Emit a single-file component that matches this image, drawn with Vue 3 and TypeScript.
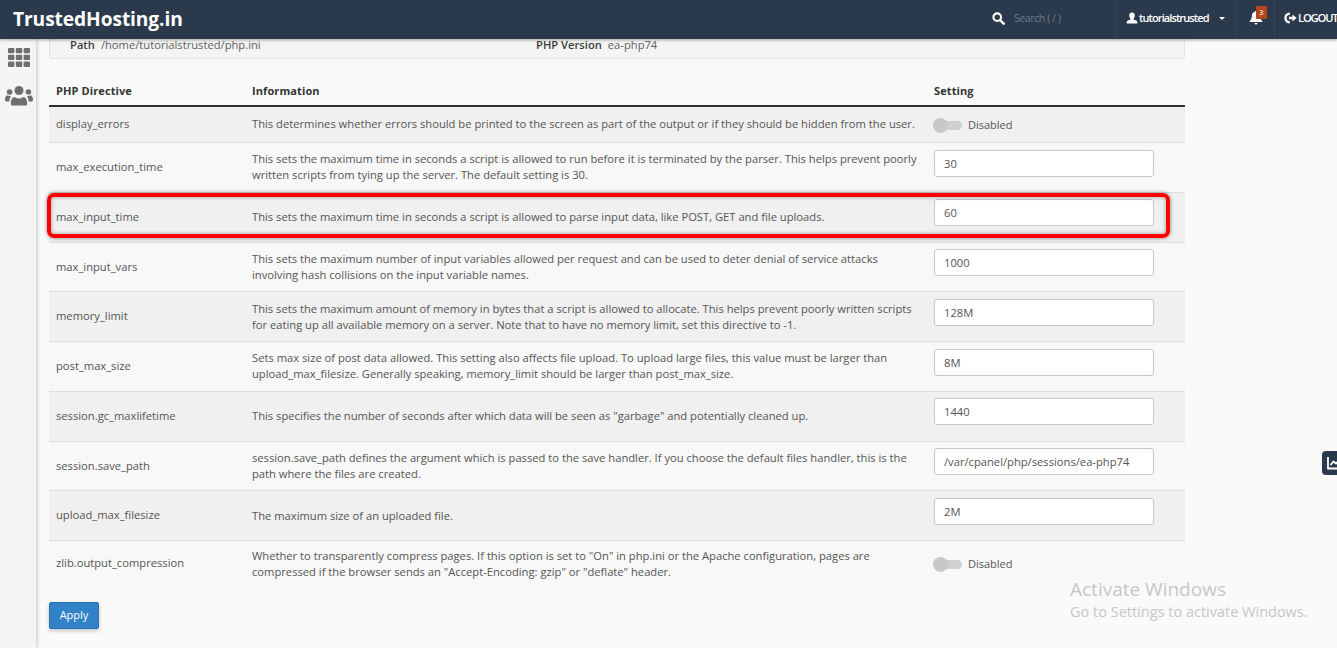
<script setup lang="ts">
interface Row {
  name: string
  info: string
  value?: string
}
const rows: Row[] = [
  { name: 'display_errors', info: 'This determines whether errors should be printed to the screen as part of the output or if they should be hidden from the user.' },
  { name: 'max_execution_time', info: 'This sets the maximum time in seconds a script is allowed to run before it is terminated by the parser. This helps prevent poorly written scripts from tying up the server. The default setting is 30.', value: '30' },
  { name: 'max_input_time', info: 'This sets the maximum time in seconds a script is allowed to parse input data, like POST, GET and file uploads.', value: '60' },
  { name: 'max_input_vars', info: 'This sets the maximum number of input variables allowed per request and can be used to deter denial of service attacks involving hash collisions on the input variable names.', value: '1000' },
  { name: 'memory_limit', info: 'This sets the maximum amount of memory in bytes that a script is allowed to allocate. This helps prevent poorly written scripts for eating up all available memory on a server. Note that to have no memory limit, set this directive to -1.', value: '128M' },
  { name: 'post_max_size', info: 'Sets max size of post data allowed. This setting also affects file upload. To upload large files, this value must be larger than upload_max_filesize. Generally speaking, memory_limit should be larger than post_max_size.', value: '8M' },
  { name: 'session.gc_maxlifetime', info: 'This specifies the number of seconds after which data will be seen as "garbage" and potentially cleaned up.', value: '1440' },
  { name: 'session.save_path', info: 'session.save_path defines the argument which is passed to the save handler. If you choose the default files handler, this is the path where the files are created.', value: '/var/cpanel/php/sessions/ea-php74' },
  { name: 'upload_max_filesize', info: 'The maximum size of an uploaded file.', value: '2M' },
  { name: 'zlib.output_compression', info: 'Whether to transparently compress pages. If this option is set to "On" in php.ini or the Apache configuration, pages are compressed if the browser sends an "Accept-Encoding: gzip" or "deflate" header.' },
]
</script>

<template>
  <div class="page">
    <header class="topbar">
      <div class="logo">TrustedHosting.in</div>
      <div class="search">
        <svg class="search-icon" viewBox="0 0 14 14" width="13" height="13">
          <circle cx="5.6" cy="5.6" r="4.1" fill="none" stroke="#fff" stroke-width="2.2" />
          <path d="M8.7 8.7 12.6 12.6" stroke="#fff" stroke-width="2.6" stroke-linecap="round" />
        </svg>
        <span class="search-text">Search ( / )</span>
      </div>
      <div class="user seg">
        <svg viewBox="0 0 12 12" width="12" height="12">
          <path d="M6 .6c1.8 0 2.8 1.3 2.8 3 0 1.3-.6 2.500-1.300 3.200v.8c1.200.5 3.600 1 3.800 2.200v1.600H.7V9.800c.2-1.200 2.600-1.700 3.800-2.200v-.8C3.800 6.100 3.200 4.900 3.200 3.600c0-1.700 1-3 2.800-3Z" fill="#fff" />
        </svg>
        <span class="user-name">tutorialstrusted</span>
        <i class="caret"></i>
      </div>
      <div class="bell seg">
        <svg viewBox="0 0 14 15" width="14" height="15">
          <path d="M7 .8c.6 0 1 .4 1 .9 2 .4 3.100 2 3.100 4 0 3.300 1.300 4.500 2.200 5.400v.8H.7v-.8c.9-.9 2.200-2.100 2.200-5.400 0-2 1.100-3.600 3.100-4 0-.5.400-.9 1-.9Z" fill="#fff" />
          <path d="M5.500 13h3c0 .9-.7 1.500-1.500 1.500S5.500 13.900 5.500 13Z" fill="#fff" />
        </svg>
        <span class="badge">3</span>
      </div>
      <div class="logout seg">
        <svg viewBox="0 0 13 12" width="13" height="12">
          <path d="M5.800 1.600A4.400 4.400 0 1 0 5.800 10.400" fill="none" stroke="#fff" stroke-width="2.300" />
          <path d="M5 4.700h3.500V2.400L12.700 6 8.500 9.600V7.300H5Z" fill="#fff" />
        </svg>
        <span>LOGOUT</span>
      </div>
    </header>

    <div class="body">
      <aside class="sidebar">
        <svg class="side-grid" viewBox="0 0 22 19" width="22" height="19">
          <g fill="#6f6f6f">
            <rect x="0" y="0" width="6.400" height="5.300" rx="1" />
            <rect x="7.800" y="0" width="6.400" height="5.300" rx="1" />
            <rect x="15.600" y="0" width="6.400" height="5.300" rx="1" />
            <rect x="0" y="6.800" width="6.400" height="5.300" rx="1" />
            <rect x="7.800" y="6.800" width="6.400" height="5.300" rx="1" />
            <rect x="15.600" y="6.800" width="6.400" height="5.300" rx="1" />
            <rect x="0" y="13.600" width="6.400" height="5.300" rx="1" />
            <rect x="7.800" y="13.600" width="6.400" height="5.300" rx="1" />
            <rect x="15.600" y="13.600" width="6.400" height="5.300" rx="1" />
          </g>
        </svg>
        <svg class="side-users" viewBox="0 0 28 20" width="28" height="20">
          <g fill="#6f6f6f">
            <circle cx="14" cy="4.500" r="4.500" />
            <circle cx="4.600" cy="6" r="2.800" />
            <circle cx="23.400" cy="6" r="2.800" />
            <path d="M7.300 19.600c-1 0-1.500-.6-1.500-1.500 0-4 1.300-7.200 3.700-7.200 1 .8 2.700 1.500 4.500 1.500s3.500-.7 4.500-1.500c2.400 0 3.700 3.200 3.700 7.200 0 .9-.5 1.500-1.500 1.500Z" />
            <path d="M6.300 9.800c-1 1.200-1.800 3-1.900 5.700H1.300C.4 15.500 0 15 0 14.100c0-2.600.7-4.900 2.400-4.900.9.700 2.400 1.100 3.900.6Z" />
            <path d="M21.700 9.800c1 1.200 1.800 3 1.900 5.700h3.100c.9 0 1.300-.5 1.300-1.400 0-2.600-.7-4.900-2.400-4.900-.9.700-2.400 1.100-3.900.6Z" />
          </g>
        </svg>
      </aside>

      <main class="main">
        <section class="info-card">
          <div class="info-item info-path"><b>Path</b><span>/home/tutorialstrusted/php.ini</span></div>
          <div class="info-item"><b>PHP Version</b><span>ea-php74</span></div>
        </section>

        <div class="table">
          <div class="head">
            <div>PHP Directive</div>
            <div>Information</div>
            <div>Setting</div>
          </div>
          <div
            v-for="(row, i) in rows"
            :key="row.name"
            class="row"
            :class="{ shaded: i % 2 === 0, first: i === 0, last: i === rows.length - 1 }"
          >
            <div class="name">{{ row.name }}</div>
            <div class="desc">{{ row.info }}</div>
            <div v-if="row.value" class="setting">
              <input class="field" type="text" :value="row.value" />
            </div>
            <div v-else class="switch-cell">
              <span class="switch"><i class="knob"></i></span>
              <span class="switch-label">Disabled</span>
            </div>
          </div>
        </div>

        <button class="apply" type="button">Apply</button>
      </main>
    </div>

    <div class="highlight"></div>
    <div class="side-tab">
      <svg viewBox="0 0 15 14" width="15" height="14">
        <path d="M1 1v11.500h13" fill="none" stroke="#fff" stroke-width="1.800" />
        <path d="M3.500 9 6.500 5.500 9 7.500 13.500 3" fill="none" stroke="#fff" stroke-width="1.800" />
      </svg>
    </div>
    <div class="watermark">
      <div class="wm-title">Activate Windows</div>
      <div class="wm-sub">Go to Settings to activate Windows.</div>
    </div>
  </div>
</template>

<style>
html, body { margin: 0; background: #fafafa; overflow: hidden; }
</style>

<style scoped>
.page {
  position: relative;
  width: 1337px;
  height: 648px;
  overflow: hidden;
  background: #fafafa;
  font-family: "Open Sans", "Noto Sans", sans-serif;
  font-size: 11.2px;
  color: #555;
}
.topbar {
  position: relative;
  z-index: 3;
  display: flex;
  align-items: center;
  height: 39px;
  background: #2a3a4c;
  box-shadow: 0 1px 3px rgba(0, 0, 0, .35);
  color: #fff;
  white-space: nowrap;
}
.logo {
  margin-left: 13px;
  padding-bottom: 3px;
  font-size: 19.2px;
  font-weight: 700;
  letter-spacing: -.1px;
}
.search {
  display: flex;
  align-items: center;
  margin-left: auto;
  width: 124px;
  padding-bottom: 3px;
}
.search-icon { flex: none; }
.search-text {
  margin-left: 9px;
  font-size: 10.500px;
  letter-spacing: -.4px;
  color: #6f7c89;
}
.seg {
  display: flex;
  align-items: center;
  height: 39px;
  padding-bottom: 4px;
  border-left: 1px solid #33445a;
  box-sizing: border-box;
}
.user { width: 119px; padding-left: 9px; }
.user-name {
  margin-left: 1px;
  font-size: 11px;
  font-weight: 600;
  letter-spacing: -.9px;
}
.caret {
  margin-left: 10px;
  margin-top: 2px;
  border-left: 3.500px solid transparent;
  border-right: 3.500px solid transparent;
  border-top: 3.500px solid #fff;
}
.bell { position: relative; width: 39px; padding-left: 13px; }
.badge {
  position: absolute;
  left: 20px;
  top: 6px;
  width: 11px;
  height: 13px;
  background: #b5451b;
  border-radius: 1px;
  color: #e9c8b5;
  font-size: 7.500px;
  font-weight: 700;
  line-height: 12px;
  text-align: center;
}
.logout {
  flex: 0 0 63px;
  min-width: 0;
  padding-left: 9px;
  font-size: 11.200px;
  font-weight: 600;
  letter-spacing: -1.150px;
  gap: 1px;
}
.logout svg { flex: none; }
.body { display: flex; height: 609px; }
.sidebar {
  flex: 0 0 36px;
  display: flex;
  flex-direction: column;
  align-items: center;
  background: #f5f5f5;
  box-shadow: 1px 0 4px rgba(0, 0, 0, .22);
  padding: 9px 0 0 2px;
  box-sizing: border-box;
}
.side-users { margin-top: 19px; }
.main {
  flex: none;
  width: 1136px;
  margin-left: 13px;
}
.info-card {
  display: flex;
  height: 20px;
  box-sizing: border-box;
  background: #f4f4f4;
  border: 1px solid #e3e3e3;
  border-top: 0;
  border-radius: 0 0 3px 3px;
  line-height: 12px;
  color: #5f5f5f;
}
.info-item { display: flex; gap: 6px; }
.info-item b { font-weight: 600; color: #3c3c3c; }
.info-path { width: 466px; padding-left: 20px; }
.table { margin-top: 19px; }
.head,
.row {
  display: grid;
  grid-template-columns: 196px 682px 258px;
}
.head {
  height: 27px;
  border-bottom: 2px solid #2f2f2f;
  font-size: 11px;
  font-weight: 700;
  color: #333;
  letter-spacing: .1px;
  line-height: 26px;
}
.head > div { padding-left: 7px; }
.row {
  min-height: 49.750px;
  box-sizing: border-box;
  background: #f8f8f8;
  border-bottom: 1px solid #dedede;
  align-items: center;
}
.row.shaded { background: #f0f0f0; }
.row.first { min-height: 36px; }
.row.first .desc { padding-bottom: 2px; }
.row.last { min-height: 45px; border-bottom: 0; }
.name { padding: 0 0 1.500px 7px; color: #555; }
.row.first .name { padding-bottom: 2px; }
.desc { padding: 0 7px; line-height: 16px; color: #555; }
.setting { align-self: start; padding: 6.500px 7px 0; }
.field {
  display: block;
  box-sizing: border-box;
  width: 220px;
  height: 27px;
  padding: 0 9px;
  background: #fff;
  border: 1px solid #c8c8c8;
  border-radius: 3px;
  font: inherit;
  color: #555;
  outline: none;
}
.switch-cell {
  display: flex;
  align-items: center;
  padding-left: 6px;
}
.switch {
  position: relative;
  display: block;
  width: 29px;
  height: 9px;
  background: #d0d0d0;
  border-radius: 5px;
  margin-top: 1px;
}
.knob {
  position: absolute;
  left: 0;
  top: -3px;
  width: 15px;
  height: 15px;
  border-radius: 50%;
  background: #c8c8c8;
}
.switch-label { margin-left: 6px; color: #555; font-size: 11px; }
.apply {
  display: block;
  margin-top: 16px;
  width: 50px;
  height: 27px;
  padding: 0 0 2px;
  background: #3182c8;
  border: 1px solid #2a6fae;
  border-radius: 2px;
  box-shadow: 0 2px 4px rgba(0, 0, 0, .2);
  color: #fff;
  font: inherit;
  font-weight: 500;
  font-size: 11px;
}
.highlight {
  position: absolute;
  z-index: 2;
  left: 47px;
  top: 193px;
  width: 1123px;
  height: 45px;
  box-sizing: border-box;
  border: 4px solid #f00;
  border-radius: 7px;
  box-shadow: 0 0 4px rgba(0, 0, 0, .45), inset 0 0 4px rgba(0, 0, 0, .35);
}
.side-tab {
  position: absolute;
  left: 1322px;
  top: 451px;
  width: 20px;
  height: 24px;
  display: flex;
  align-items: center;
  padding-left: 5px;
  box-sizing: border-box;
  background: #2a3a4c;
  border-radius: 4px 0 0 4px;
}
.side-tab svg { flex: none; }
.watermark {
  position: absolute;
  left: 1070px;
  top: 577px;
  color: #c6c6c6;
  white-space: nowrap;
}
.wm-title { font-size: 19px; line-height: 25px; }
.wm-sub { font-size: 14.500px; line-height: 20px; }
</style>
